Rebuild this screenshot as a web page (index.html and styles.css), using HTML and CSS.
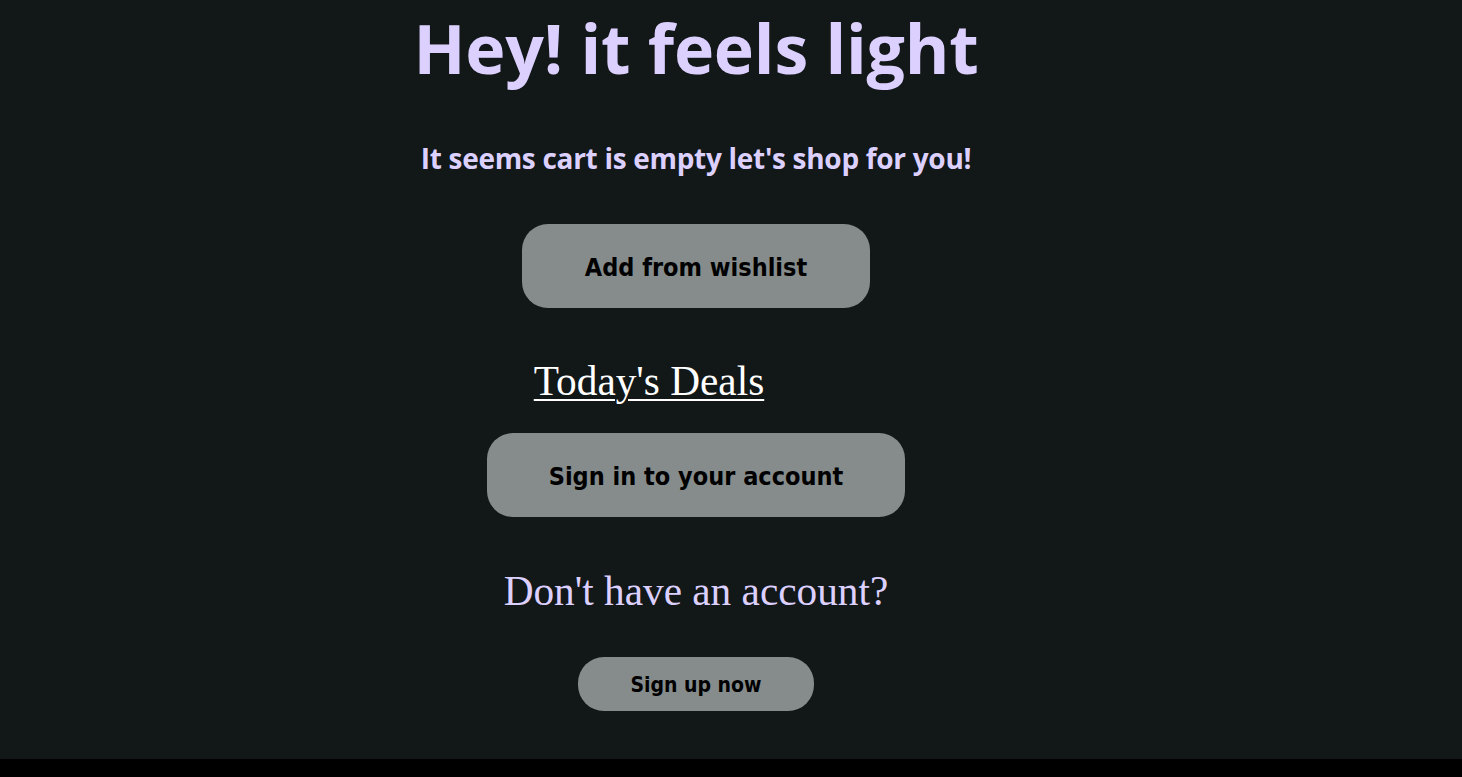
FILE: index.html
```html
<!DOCTYPE html>
<html>
<head>
<meta charset="utf-8">
<link rel="stylesheet" href="styles.css">
</head>
<body>
<main class="page">
  <section class="empty">
    <h1 class="title">Hey! it feels light</h1>
    <h3 class="subtitle">It seems cart is empty let's shop for you!</h3>
    <button class="btn btn-big btn-wish">Add from wishlist</button>
    <a class="deals" href="#">Today's Deals</a>
    <button class="btn btn-big btn-sign">Sign in to your account</button>
    <p class="noacc">Don't have an account?</p>
    <button class="btn btn-small">Sign up now</button>
  </section>
</main>
</body>
</html>
```
FILE: styles.css
```css
html, body {
  margin: 0;
  padding: 0;
  background: #000;
}
.page {
  height: 759px;
  background: #121718;
  display: flex;
  justify-content: center;
}
.empty {
  display: flex;
  flex-direction: column;
  align-items: center;
  margin-right: 70px;
}
.title {
  margin: 8px 0 0 0;
  font-family: "Open Sans", sans-serif;
  font-weight: 700;
  font-size: 68px;
  line-height: 80px;
  color: #dcd0ff;
  letter-spacing: -0.2px;
}
.subtitle {
  margin: 52px 0 0 0;
  font-family: "Open Sans", sans-serif;
  font-weight: 700;
  font-size: 28px;
  line-height: 36px;
  color: #dcd0ff;
  letter-spacing: -0.3px;
}
.btn {
  border: none;
  background: #868c8c;
  color: #000;
  font-family: "DejaVu Sans Condensed", "DejaVu Sans", sans-serif;
  font-weight: 700;
  cursor: pointer;
  padding: 2px 0 0 0;
}
.btn-big {
  height: 84px;
  border-radius: 26px;
  font-size: 25px;
}
.btn-wish {
  width: 348px;
  margin-top: 48px;
}
.btn-sign {
  width: 418px;
  margin-top: 29px;
}
.deals {
  margin-top: 50px;
  margin-right: 94px;
  font-family: "Liberation Serif", serif;
  font-size: 41.3px;
  line-height: 46px;
  color: #fff;
  text-decoration: underline;
  text-decoration-thickness: 2px;
  text-underline-offset: 4px;
}
.noacc {
  margin: 51px 0 0 0;
  font-family: "Liberation Serif", serif;
  font-size: 41.3px;
  line-height: 46px;
  color: #dcd0ff;
}
.btn-small {
  width: 236px;
  height: 54px;
  border-radius: 26px;
  font-size: 21px;
  margin-top: 43px;
}
```
